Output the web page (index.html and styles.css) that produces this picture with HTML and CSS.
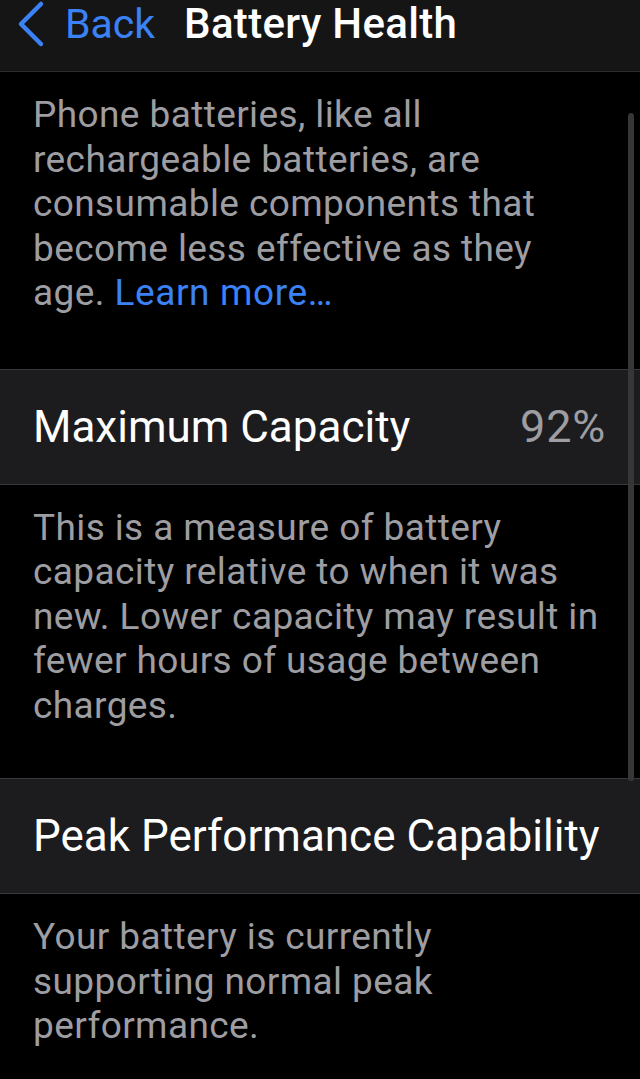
FILE: index.html
```html
<!DOCTYPE html>
<html lang="en">
<head>
    <meta charset="UTF-8">
    <meta name="viewport" content="width=device-width, initial-scale=1.0">
    <title>Battery Health</title>
    <link rel="stylesheet" href="styles.css">
</head>
<body>
    <header class="nav-bar">
        <a class="back-link" href="#">
            <svg class="chevron" width="30" height="48" viewBox="0 0 30 48">
                <path d="M25 4 L5 24 L25 44" fill="none" stroke="currentColor" stroke-width="4.5" stroke-linecap="round" stroke-linejoin="round"/>
            </svg>
            <span>Back</span>
        </a>
        <h1 class="nav-title">Battery Health</h1>
    </header>

    <main class="content">
        <p class="footnote first">Phone batteries, like all rechargeable batteries, are consumable components that become less effective as they age. <a href="#" class="link">Learn more…</a></p>

        <div class="row">
            <span class="row-title">Maximum Capacity</span>
            <span class="row-value">92%</span>
        </div>

        <p class="footnote">This is a measure of battery capacity relative to when it was new. Lower capacity may result in fewer hours of usage between charges.</p>

        <div class="row">
            <span class="row-title">Peak Performance Capability</span>
        </div>

        <p class="footnote">Your battery is currently supporting normal peak performance.</p>
    </main>

    <div class="scroll-indicator"></div>
</body>
</html>
```

FILE: styles.css
```css
body {
    margin: 0;
    background: #000;
    font-family: Roboto, "Noto Sans", sans-serif;
    color: #fff;
    width: 640px;
    height: 1079px;
    overflow: hidden;
    position: relative;
}

.nav-bar {
    box-sizing: border-box;
    height: 72px;
    background: #151515;
    border-bottom: 1px solid #2c2c2e;
    display: flex;
    align-items: center;
    padding-left: 16px;
    padding-bottom: 24px;
}

.back-link {
    display: flex;
    align-items: center;
    color: #3a82f6;
    text-decoration: none;
    font-size: 41px;
}

.chevron {
    margin-right: 19px;
}

.nav-title {
    margin: 0 0 0 29px;
    font-size: 42px;
    font-weight: 500;
    letter-spacing: 0.3px;
}

.footnote {
    margin: 0;
    padding: 21px 36px 50px 33px;
    font-size: 37px;
    line-height: 44.5px;
    letter-spacing: 0.4px;
    color: #9d9da2;
}

.footnote.first {
    padding-bottom: 53px;
}

.link {
    color: #3a82f6;
    text-decoration: none;
    letter-spacing: 0.6px;
}

.row {
    background: #1c1c1e;
    border-top: 1px solid #38383a;
    border-bottom: 1px solid #38383a;
    height: 114px;
    display: flex;
    align-items: center;
    justify-content: space-between;
    padding: 0 34px 0 33px;
}

.row-title {
    font-size: 44px;
    white-space: nowrap;
}

.row-value {
    font-size: 45px;
    letter-spacing: 0.8px;
    color: #9d9da2;
}

.scroll-indicator {
    position: absolute;
    left: 628px;
    top: 113px;
    width: 6px;
    height: 668px;
    background: #363636;
    border-radius: 3px;
}
```
